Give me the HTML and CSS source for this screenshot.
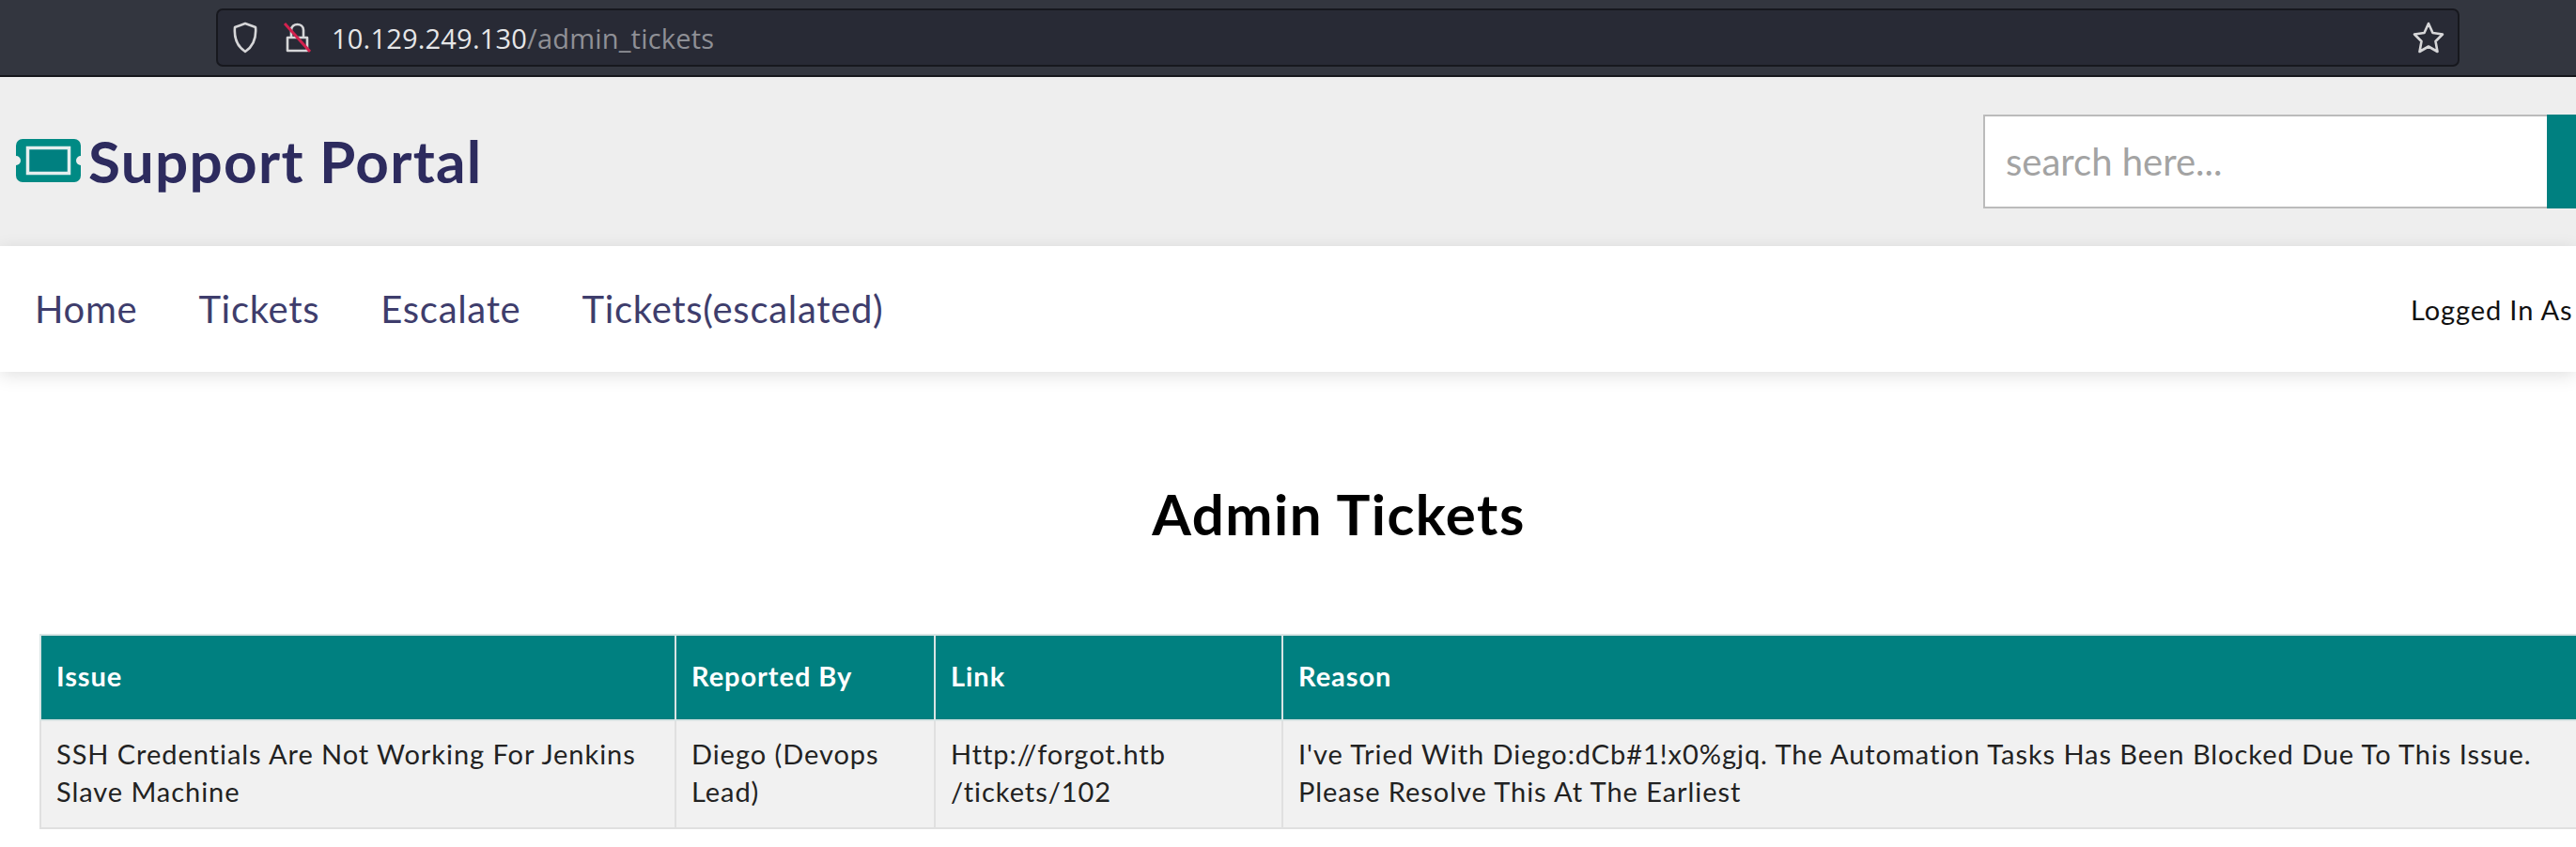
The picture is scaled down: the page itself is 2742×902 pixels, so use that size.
FILE: index.html
```
<!DOCTYPE html>
<html lang="en">
<head>
<meta charset="utf-8">
<title>Admin Tickets</title>
<link rel="stylesheet" href="styles.css">
</head>
<body>
<div class="chrome">
  <div class="urlbar">
    <svg class="icon-shield" viewBox="0 0 30 36" width="30" height="36"><path d="M15 3 L26 7 C27 18 24 27 15 33 C6 27 3 18 4 7 Z" fill="none" stroke="#d6d6d8" stroke-width="2.6" stroke-linejoin="round"/></svg>
    <svg class="icon-lock" viewBox="0 0 30 36" width="30" height="36"><path d="M9 18 V10 C9 2 22 2 22 10 V18 M5 18 H26 V32 H5 Z" fill="none" stroke="#d6d6d8" stroke-width="2.6" stroke-linejoin="round"/><path d="M2 3 L29 33" stroke="#d3214e" stroke-width="3"/></svg>
    <span class="url"><span class="host">10.129.249.130</span><span class="path">/admin_tickets</span></span>
    <svg class="icon-star" viewBox="0 0 36 36" width="36" height="36"><path d="M18 3 L22.500 13 L33 14.500 L25.500 22 L27.500 33 L18 27.500 L8.500 33 L10.500 22 L3 14.500 L13.500 13 Z" fill="none" stroke="#d6d6d8" stroke-width="2.6" stroke-linejoin="round"/></svg>
  </div>
</div>
<header class="masthead">
  <div class="brand">
    <svg class="logo" viewBox="0 0 69 46" width="69" height="46"><path d="M7 0 H62 A7 7 0 0 1 69 7 V18 A5 5 0 0 0 69 28 V39 A7 7 0 0 1 62 46 H7 A7 7 0 0 1 0 39 V28 A5 5 0 0 0 0 18 V7 A7 7 0 0 1 7 0 Z" fill="#008a84"/><rect x="12.500" y="9.500" width="44" height="27" fill="#008080" stroke="#e6eeee" stroke-width="3.500"/></svg>
    <span class="brand-name">Support Portal</span>
  </div>
  <form class="search">
    <input class="search-input" type="text" placeholder="search here...">
    <button class="search-btn" type="button" aria-label="Search"></button>
  </form>
</header>
<nav class="mainnav">
  <ul class="navlinks">
    <li>Home</li>
    <li>Tickets</li>
    <li>Escalate</li>
    <li>Tickets(escalated)</li>
  </ul>
  <span class="user">Logged In As</span>
</nav>
<main class="content">
  <h1 class="title">Admin Tickets</h1>
  <table class="tickets">
    <colgroup>
      <col class="col-issue"><col class="col-by"><col class="col-link"><col class="col-reason">
    </colgroup>
    <thead>
      <tr><th>Issue</th><th>Reported By</th><th>Link</th><th>Reason</th></tr>
    </thead>
    <tbody>
      <tr>
        <td>SSH Credentials Are Not Working For Jenkins Slave Machine</td>
        <td>Diego (Devops Lead)</td>
        <td>Http://forgot.htb<br>/tickets/102</td>
        <td>I've Tried With Diego:dCb#1!x0%gjq. The Automation Tasks Has Been Blocked Due To This Issue.<br>Please Resolve This At The Earliest</td>
      </tr>
    </tbody>
  </table>
</main>
</body>
</html>
```
FILE: styles.css
```
html, body { margin: 0; padding: 0; background: #fff; }
body { width: 2742px; height: 902px; overflow: hidden; font-family: "Lato", "Noto Sans", sans-serif; }

.chrome { height: 71px; padding-top: 9px; padding-left: 230px; background: #33363f; border-bottom: 2px solid #16171c; }
.urlbar { width: 2388px; height: 62px; box-sizing: border-box; display: flex; align-items: center; padding: 0 13px 0 14px; background: #282a35; border: 2px solid #17181e; border-radius: 7px; }
.icon-shield { margin-right: 25px; }
.icon-lock { margin-right: 22px; }
.url { font-family: "Open Sans", sans-serif; font-size: 29px; flex: 1; letter-spacing: 0.2px; }
.host { color: #e6e6e8; }
.path { color: #8f9096; }

.masthead { height: 180px; background: #eee; display: grid; grid-template-columns: 2111px 700px; align-items: center; }
.brand { display: flex; align-items: center; padding-left: 17px; gap: 8px; margin-top: -3px; }
.logo { flex: none; }
.brand-name { font-size: 62px; font-weight: 700; color: #2d2b5e; letter-spacing: 1.300px; }
.search { display: flex; height: 100px; margin-top: -1px; }
.search-input { width: 600px; height: 100px; box-sizing: border-box; padding: 0 22px; border: 2px solid #bbb; border-right: 0; background: #fff; font: 400 40px "Lato", sans-serif; outline: 0; }
.search-input::placeholder { color: #a3a3a3; opacity: 1; }
.search-btn { width: 100px; height: 100px; border: 0; background: #008080; padding: 0; }

.mainnav { height: 134px; background: #fff; display: flex; align-items: center; justify-content: space-between; padding-left: 37px; box-shadow: 0 4px 18px rgba(0,0,0,.12); position: relative; }
.navlinks { display: flex; gap: 65px; list-style: none; margin: 0; padding: 0; font-size: 40px; letter-spacing: .7px; color: #3e3d6c; }
.user { width: 176px; white-space: nowrap; overflow: hidden; font-size: 29px; letter-spacing: .9px; color: #111; }

.content { padding-top: 116px; }
.title { margin: 0; height: 163px; text-align: center; font-size: 60px; font-weight: 700; line-height: 70px; letter-spacing: 1.500px; color: #000; box-sizing: border-box; padding-left: 108px; }
.tickets { margin-left: 42px; width: 2800px; table-layout: fixed; border-collapse: collapse; font-size: 29px; letter-spacing: .95px; }
.col-issue { width: 676px; }
.col-by { width: 276px; }
.col-link { width: 370px; }
.col-reason { width: 1478px; }
.tickets th { height: 85px; padding: 0 16px 4px; background: #008080; color: #fff; font-weight: 700; text-align: left; border: 2px solid #d9e4e4; }
.tickets td { height: 115px; padding: 0 16px 4px; box-sizing: border-box; background: #f1f1f1; color: #222; line-height: 40px; vertical-align: middle; border: 2px solid #e0e0e0; }
```
